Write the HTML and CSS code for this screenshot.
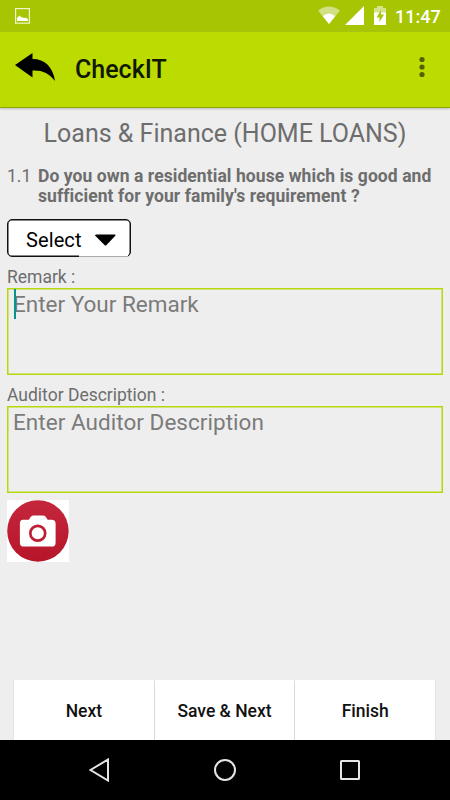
FILE: index.html
```html
<!DOCTYPE html>
<html lang="en">
<head>
<meta charset="utf-8">
<title>CheckIT</title>
<link rel="stylesheet" href="styles.css">
</head>
<body>
<div class="screen">
  <div class="status">
    <svg class="status-photo" width="15" height="16" viewBox="0 0 15 16"><rect x=".6" y=".6" width="13.8" height="14.6" fill="none" stroke="#eef5c8" stroke-width="1.2"/><path d="M2 13V10L4.5 7.5L6.5 9.5L7.5 9L9 10.3L11 9.5L13 11.5V13Z" fill="#fff"/></svg>
    <svg class="status-wifi" width="22" height="18" viewBox="0 0 22 18"><path d="M0 4.5Q11-3.5 22 4.5L11 18Z" fill="#d1e083"/><path d="M4.7 10Q11 5 17.300 10L11 18Z" fill="#fff"/></svg>
    <svg class="status-signal" width="19" height="19" viewBox="0 0 19 19"><path d="M19 0V19H0Z" fill="#fff"/></svg>
    <svg class="status-battery" width="12" height="19" viewBox="0 0 12 19"><path d="M0 2H3V0H9V2H12V7H0Z" fill="#d5e38d"/><path d="M0 6.500H12V19H0Z" fill="#fff"/><path d="M7 4L2.500 11.500H5.500V16L10 8.500H7Z" fill="#a7c502"/></svg>
    <span class="clock">11:47</span>
  </div>
  <header class="appbar">
    <svg class="back" width="41" height="29" viewBox="0 0 41 29"><path d="M0 12L17.500 0V6C30 6 38 14 40 28C34 20 27 17 17.500 17.500V24.500Z" fill="#000"/></svg>
    <h1 class="app-title">CheckIT</h1>
    <svg class="more" width="6" height="22" viewBox="0 0 6 22" fill="#526003"><circle cx="3" cy="3.500" r="2.600"/><circle cx="3" cy="11" r="2.600"/><circle cx="3" cy="18.500" r="2.600"/></svg>
  </header>
  <main class="content">
    <h2 class="section-title">Loans &amp; Finance (HOME LOANS)</h2>
    <div class="question">
      <span class="number">1.1</span>
      <p class="prompt">Do you own a residential house which is good and<br>sufficient for your family's requirement ?</p>
    </div>
    <div class="select">
      <span class="select-text">Select</span>
      <svg class="caret" width="21" height="12" viewBox="0 0 21 12"><path d="M0 1.500Q0 .5 1.500 .5H19.500Q21 .5 20.300 1.800L11.500 11Q10.500 12 9.500 11Z"/></svg>
    </div>
    <div class="label">Remark :</div>
    <div class="field"><span class="cursor"></span>Enter Your Remark</div>
    <div class="label">Auditor Description :</div>
    <div class="field wide-hint">Enter Auditor Description</div>
    <div class="camera">
      <svg width="62" height="62" viewBox="0 0 62.500 62.500"><defs><linearGradient id="red" x2="0" y2="1"><stop stop-color="#c4273d"/><stop offset="1" stop-color="#b71529"/></linearGradient></defs><circle cx="31.200" cy="31.200" r="31" fill="url(#red)"/><path d="M16 20H22L24 17Q25 15.500 27 15.500H36Q38 15.500 39 17L41 20H45Q49 20 49 24V43Q49 47 45 47H17Q13 47 13 43V24Q13 20 16 20Z" fill="#fff"/><circle cx="31" cy="33.500" r="7.500" fill="#fff" stroke="#bf1d33" stroke-width="2.700"/></svg>
    </div>
    <div class="actions">
      <div class="action">Next</div>
      <div class="action">Save &amp; Next</div>
      <div class="action">Finish</div>
    </div>
  </main>
  <nav class="navbar">
    <svg width="22" height="24" viewBox="0 0 22 24"><path d="M19 1.500V22.500L1.500 12Z"/></svg>
    <svg width="24" height="24" viewBox="0 0 24 24"><circle cx="12" cy="12" r="10"/></svg>
    <svg width="22" height="22" viewBox="0 0 22 22"><rect x="2" y="2" width="18" height="18" rx=".5"/></svg>
  </nav>
</div>
</body>
</html>
```
FILE: styles.css
```css
* { box-sizing: border-box; }
body { margin: 0; font-family: Roboto, sans-serif; color: #6d6d6d; }
h1, h2, p { margin: 0; font-weight: 400; }
svg { display: block; flex: none; }
.screen { width: 450px; height: 800px; display: flex; flex-direction: column; background: #eee; overflow: hidden; white-space: nowrap; }
.status { height: 32px; flex: none; display: flex; align-items: flex-start; padding: 6px 0 0 15px; background: #a7c502; }
.status-photo { margin-top: 2px; }
.status-wifi { margin-left: 288px; }
.status-signal { margin-left: 5px; }
.status-battery { margin-left: 10px; }
.clock { margin-left: 9px; font-size: 18px; line-height: 21px; font-weight: 500; color: #fff; }
.appbar { height: 76px; flex: none; display: flex; align-items: flex-start; padding: 20px 25px 0 15px; background: #bcdb00; border-bottom: 1px solid #8fa800; box-shadow: 0 1px 2px #bbb; }
.back { margin-top: 1px; }
.app-title { margin: 3px 0 0 19px; font-size: 25px; line-height: 30px; font-weight: 500; color: #111800; }
.more { margin: 4px 0 0 auto; }
.content { flex: 1; display: flex; flex-direction: column; padding: 11px 7px 0; }
.section-title { height: 30px; line-height: 30px; font-size: 25px; text-align: center; }
.question { display: flex; margin-top: 17px; font-size: 17.500px; line-height: 20px; }
.number { width: 31px; }
.prompt { font-weight: 700; letter-spacing: .07px; }
.select { position: relative; width: 124px; height: 38px; margin-top: 13px; display: flex; align-items: center; padding: 3px 0 0 18px; background: #fff; border: 1px solid #111; box-shadow: inset 0 0 0 .5px #111; border-radius: 5px; color: #000; font-size: 20px; letter-spacing: .1px; }
.select::after { content: ""; position: absolute; left: 71px; right: 2px; bottom: -1px; height: 2px; background: linear-gradient(#fff 50%, #aaa 50%); }
.caret { margin-left: 13px; }
.label { height: 20px; margin-top: 9px; line-height: 22px; font-size: 17.500px; }
.field { position: relative; height: 87px; margin-top: 2px; padding: 0 5px; border: 1px solid #b5d70b; box-shadow: inset 0 0 0 .5px #b5d70b; font-size: 22.500px; line-height: 30px; color: #7b7b7b; }
.field + .label { margin-top: 9px; }
.wide-hint { letter-spacing: .04px; }
.cursor { position: absolute; left: 6px; top: 0; width: 2px; height: 30px; background: #009688; }
.camera { width: 62px; height: 62px; margin-top: 7px; background: #fff; }
.actions { display: flex; gap: 1px; height: 60px; margin: auto 8px 0 7px; }
.action { flex: 1; background: #fff; box-shadow: 0 1px 1px #aaa; display: flex; align-items: center; justify-content: center; font-size: 17.500px; font-weight: 500; color: #111; padding-top: 2px; }
.navbar { position: relative; height: 60px; flex: none; display: flex; align-items: center; justify-content: space-between; padding: 0 89px; background: #000; fill: none; stroke: #e4e4e4; stroke-width: 2px; }
```
